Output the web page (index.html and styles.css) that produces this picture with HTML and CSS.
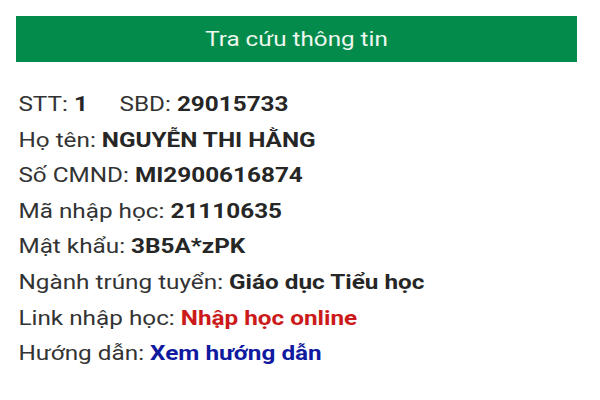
FILE: index.html
```html
<!DOCTYPE html>
<html lang="vi">
<head>
<meta charset="utf-8">
<link rel="stylesheet" href="styles.css">
</head>
<body>
<div class="page">
  <div class="bar"><span class="title">Tra cứu thông tin</span></div>
  <div class="info">
    <div class="row">STT: <b>1</b><span class="sp"></span>SBD: <b>29015733</b></div>
    <div class="row">Họ tên: <b>NGUYỄN THI HẰNG</b></div>
    <div class="row">Số CMND: <b>MI2900616874</b></div>
    <div class="row">Mã nhập học: <b>21110635</b></div>
    <div class="row">Mật khẩu: <b>3B5A*zPK</b></div>
    <div class="row">Ngành trúng tuyển: <b>Giáo dục Tiểu học</b></div>
    <div class="row">Link nhập học: <b class="red">Nhập học online</b></div>
    <div class="row">Hướng dẫn: <b class="blue">Xem hướng dẫn</b></div>
  </div>
</div>
</body>
</html>
```
FILE: styles.css
```css
html, body { margin: 0; padding: 0; background: #fff; }
.page { padding: 16px 0 0 16px; }
.bar {
  width: 561px; height: 46px;
  background: #028b4b;
  color: #eef8f0;
  font-family: Roboto, "Liberation Sans", sans-serif;
  font-size: 20px;
  display: flex; align-items: center; justify-content: center;
}
.title { display: inline-block; transform: scaleX(1.21); }
.info {
  width: 460px;
  margin-top: 25px;
  padding-left: 2px;
  font-family: Roboto, "Liberation Sans", sans-serif;
  font-size: 20px;
  color: #333;
  transform: scaleX(1.215);
  transform-origin: left top;
}
.row { line-height: 35.6px; height: 35.6px; white-space: nowrap; }
.row b { font-weight: 700; color: #262626; }
.sp { display: inline-block; width: 26px; }
.row b.red { color: #cc1a1a; }
.row b.blue { color: #0f1aa0; }
```
